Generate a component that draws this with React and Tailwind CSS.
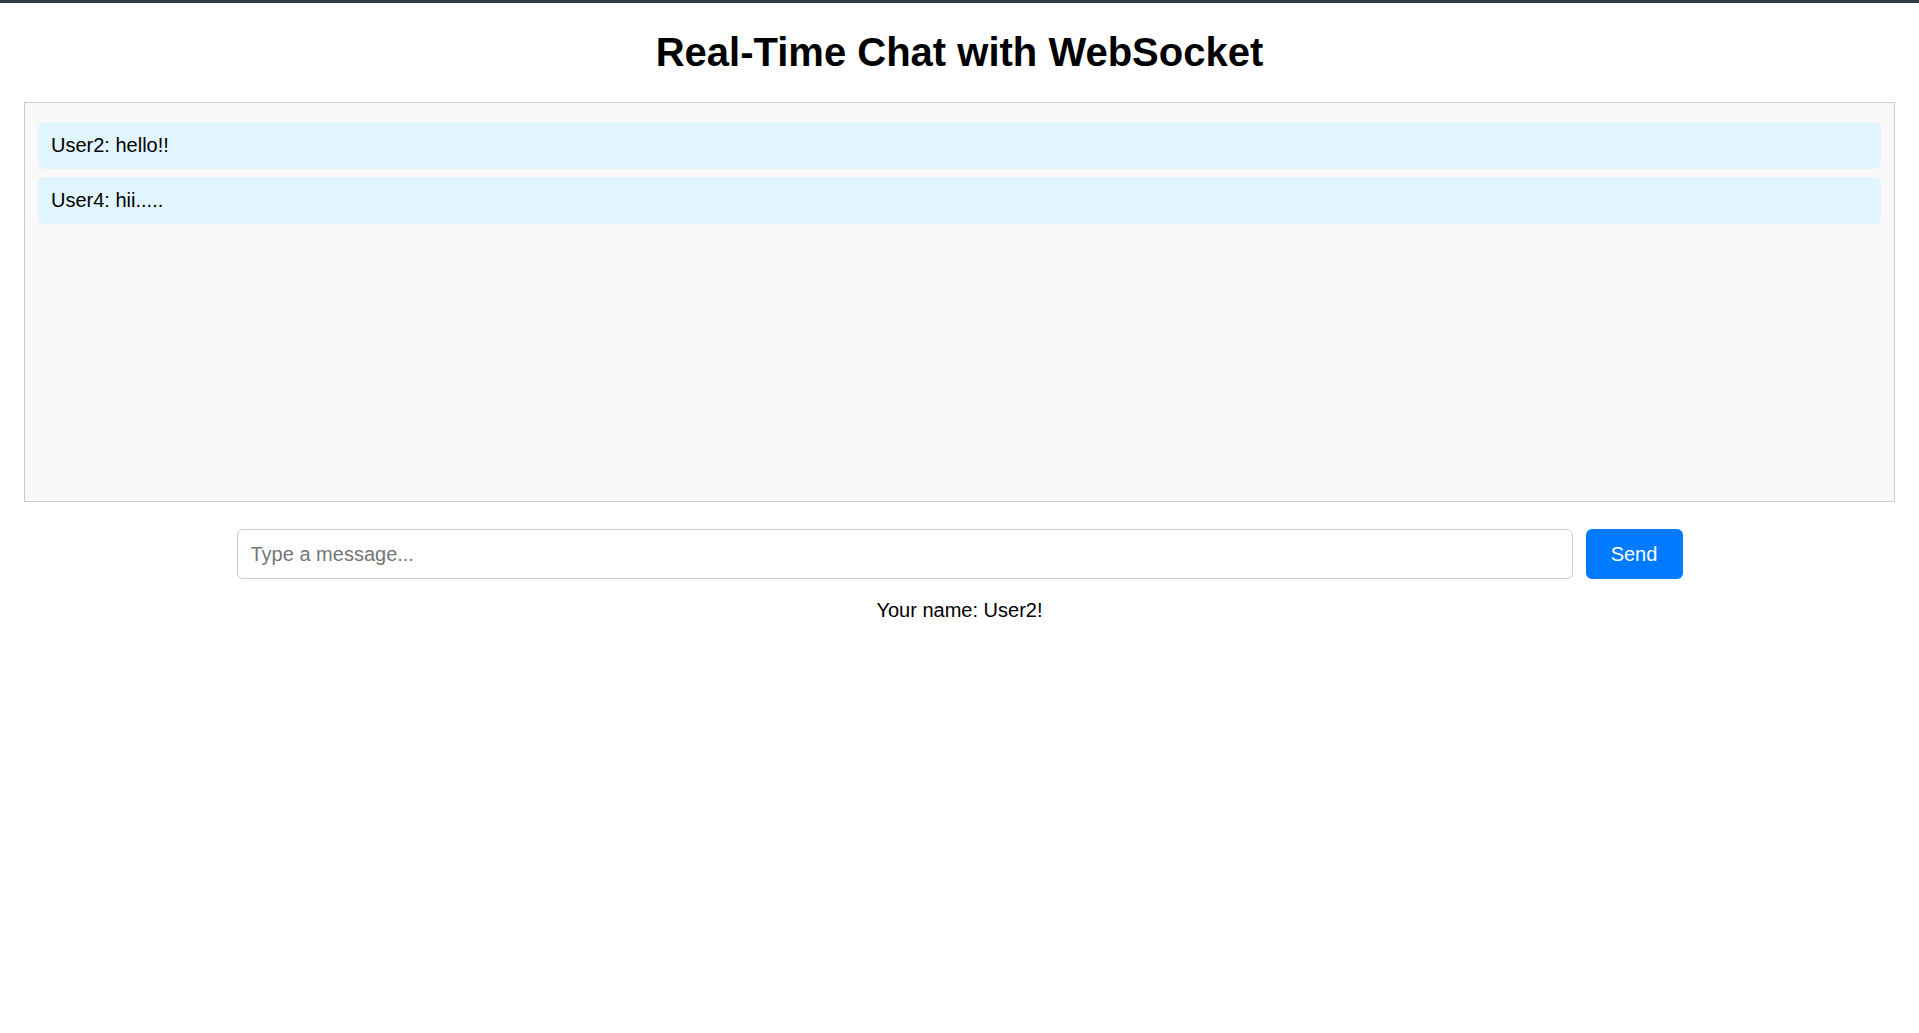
import React, { useState } from 'react';

const messages = [
  { user: 'User2', text: 'hello!!' },
  { user: 'User4', text: 'hii.....' },
];

export default function App() {
  const [draft, setDraft] = useState('');

  return (
    <div className="min-h-screen w-full bg-white font-['Liberation_Sans',Arial,sans-serif] text-black">
      {/* thin dark strip at top */}
      <div className="h-[3px] w-full bg-[#2c3f45]" />

      <h1 className="mt-[26px] mb-[27px] text-center text-[40px] font-bold leading-[46px]">
        Real-Time Chat with WebSocket
      </h1>

      <div className="mx-[24px] h-[400px] overflow-y-auto border border-[#cccccc] bg-[#f9f9f9] px-[13px] pt-[19px]">
        <div className="flex flex-col gap-[8px]">
          {messages.map((m, i) => (
            <div key={i} className="rounded-[6px] bg-[#e1f5fe] px-[13px] py-[12px] text-[20px] leading-[23px]">
              {m.user}: {m.text}
            </div>
          ))}
        </div>
      </div>

      <div className="mt-[27px] flex justify-center gap-[13px]">
        <input
          value={draft}
          onChange={(e) => setDraft(e.target.value)}
          placeholder="Type a message..."
          className="h-[50px] w-[1336px] rounded-[6px] border border-[#cccccc] bg-white px-[13px] text-[20px] text-black placeholder:text-[#757575] focus:outline-none"
        />
        <button className="h-[50px] w-[97px] rounded-[6px] bg-[#007bff] text-[20px] text-white">
          Send
        </button>
      </div>

      <p className="mt-[20px] text-center text-[20px] leading-[23px]">Your name: User2!</p>
    </div>
  );
}
